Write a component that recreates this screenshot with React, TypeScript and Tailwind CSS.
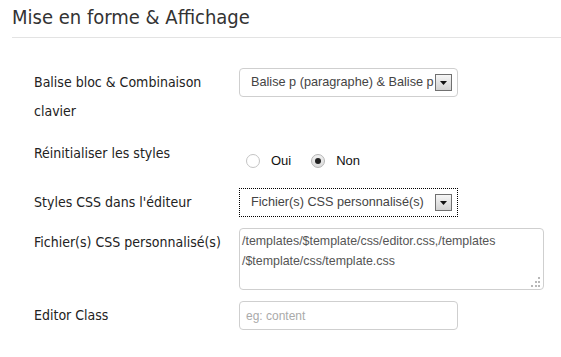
import type { ReactNode } from 'react';

const LABEL_FONT = { fontFamily: '"DejaVu Sans Condensed", "DejaVu Sans", sans-serif' };

function Arrow() {
  return (
    <span className="flex h-[17px] w-[17px] shrink-0 items-center justify-center border border-[#707070] bg-gradient-to-b from-[#f6f6f6] to-[#d2d2d2]">
      <svg width="7" height="4" viewBox="0 0 7 4">
        <path d="M0 0h7L3.5 4z" fill="#111" />
      </svg>
    </span>
  );
}

function Select({ value, focused }: { value: string; focused?: boolean }) {
  return (
    <div
      className={
        focused
          ? 'flex h-[29px] w-[219px] items-center border border-dotted border-black pl-[11px] pr-[5px]'
          : 'flex h-[29px] w-[219px] items-center rounded-[4px] border border-[#cfcfcf] pl-[11px] pr-[5px]'
      }
    >
      <span className="flex-1 overflow-hidden whitespace-nowrap text-[12.7px] text-[#444]">{value}</span>
      <Arrow />
    </div>
  );
}

function Radio({ checked, label }: { checked?: boolean; label: string }) {
  return (
    <label className="flex items-center gap-[11px]">
      <span
        className={
          checked
            ? 'flex h-[14px] w-[14px] items-center justify-center rounded-full border border-[#b5b5b5] bg-gradient-to-b from-[#f0f0f0] to-[#dcdcdc]'
            : 'h-[14px] w-[14px] rounded-full border border-[#c4c4c4] bg-white'
        }
      >
        {checked && <span className="h-[6px] w-[6px] rounded-full bg-[#222]" />}
      </span>
      <span className="text-[13px] text-[#111]">{label}</span>
    </label>
  );
}

function Row({ label, mt, children }: { label: ReactNode; mt: string; children: ReactNode }) {
  return (
    <div className={`flex ${mt}`}>
      <div className="w-[205px] shrink-0 text-[14px] leading-[29px] text-[#222]" style={LABEL_FONT}>
        {label}
      </div>
      <div>{children}</div>
    </div>
  );
}

export default function App() {
  return (
    <div className="h-[357px] w-[561px] overflow-hidden bg-white" style={{ fontFamily: '"Liberation Sans", Arial, sans-serif' }}>
      <div className="pl-[12px]">
        <h2 className="pt-[4px] text-[20px] leading-[27px] text-[#333]" style={LABEL_FONT}>
          Mise en forme &amp; Affichage
        </h2>
        <div className="mt-[6px] h-px bg-[#e3e3e3]" />
      </div>

      <div className="pl-[34px] pt-[30px]">
        <Row mt="mt-0" label={<>Balise bloc &amp; Combinaison<br />clavier</>}>
          <Select value="Balise p (paragraphe) & Balise p avec Maj+Entrée" />
        </Row>

        <Row mt="mt-[13px]" label="Réinitialiser les styles">
          <div className="mt-[7px] flex h-[29px] items-center gap-[20px] pl-[7px]">
            <Radio label="Oui" />
            <Radio label="Non" checked />
          </div>
        </Row>

        <Row mt="mt-[13px]" label="Styles CSS dans l'éditeur">
          <Select value="Fichier(s) CSS personnalisé(s)" focused />
        </Row>

        <Row mt="mt-[11px]" label="Fichier(s) CSS personnalisé(s)">
          <div className="relative h-[62px] w-[305px] rounded-[4px] border border-[#cfcfcf] pl-[2px] pt-[2px] text-[12.4px] leading-[20px] text-[#555]">
            /templates/$template/css/editor.css,/templates
            <br />
            /$template/css/template.css
            <svg className="absolute bottom-[2px] right-[3px]" width="10" height="10" viewBox="0 0 10 10">
              <g fill="#b8b8b8">
                <rect x="8" y="0" width="2" height="2" />
                <rect x="5" y="4" width="2" height="2" />
                <rect x="8" y="4" width="2" height="2" />
                <rect x="1" y="8" width="2" height="2" />
                <rect x="5" y="8" width="2" height="2" />
                <rect x="8" y="8" width="2" height="2" />
              </g>
            </svg>
          </div>
        </Row>

        <Row mt="mt-[11px]" label="Editor Class">
          <div className="flex h-[29px] w-[219px] items-center rounded-[4px] border border-[#cfcfcf] pl-[6px] text-[12px] text-[#aaa]">
            eg: content
          </div>
        </Row>
      </div>
    </div>
  );
}
